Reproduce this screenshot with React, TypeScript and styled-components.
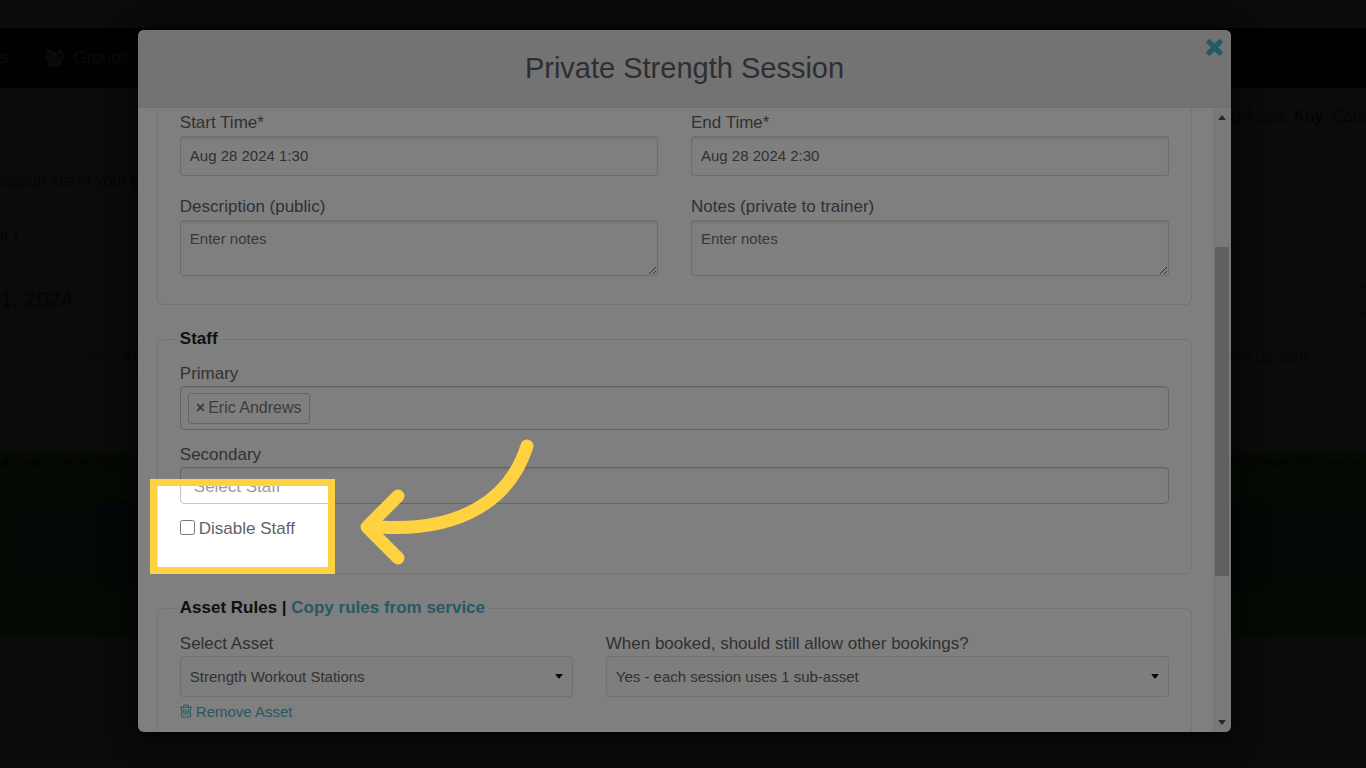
import React from "react";
import styled, { createGlobalStyle, css } from "styled-components";
import { FaPencilAlt } from "react-icons/fa";

const GlobalStyle = createGlobalStyle`
  * { box-sizing: border-box; }
  html, body { margin: 0; height: 100%; overflow: hidden; background: #161616; }
  body, button, input, textarea, select {
    font-family: "Liberation Sans", Arial, sans-serif;
  }
`;

const Page = styled.div`
  position: relative;
  height: 100vh;
  overflow: hidden;
`;

/* Calendar page, already darkened by the dialog backdrop */
const Backdrop = styled.div`
  display: flex;
  flex-direction: column;
  padding-top: 28px;
  color: #090909;
  font-size: 16px;
`;

const NavBar = styled.nav`
  display: flex;
  align-items: center;
  gap: 36px;
  height: 60px;
  background: #030303;
  color: #151515;
  font-size: 17px;
`;

const NavItem = styled.a`
  display: flex;
  align-items: center;
  gap: 9px;
  color: inherit;
  text-decoration: none;
`;

const FilterLine = styled.p`
  margin: 0;
  padding-top: 18px;
  height: 82px;
  line-height: 22px;
  white-space: nowrap;
  text-align: right;
`;

const PageText = styled.p<{ $height: number }>`
  margin: 0;
  height: ${(p) => p.$height}px;
  line-height: 22px;
  white-space: nowrap;
`;

const RangeRow = styled.div`
  display: flex;
  align-items: flex-start;
  justify-content: space-between;
  height: 54px;
`;

const RangeTitle = styled.h2`
  margin: 0;
  font-size: 22px;
  line-height: 24px;
  font-weight: 400;
`;

const RangeButton = styled.button`
  width: 36px;
  height: 32px;
  margin: -4px -29px 0 0;
  border: 2px solid #06120f;
  border-radius: 6px;
  background: none;
`;

const DayRow = styled.div`
  display: flex;
  justify-content: space-between;
  height: 28px;
  padding: 4px 58px 0 87px;
  border: 1px solid #121212;
  border-width: 1px 0;
  font-size: 15px;
  font-weight: 700;
  line-height: 20px;
  color: #061015;
`;

const EventBand = styled.div`
  height: 184px;
  margin-top: 84px;
  background: #081404;
  font-size: 11px;
  line-height: 16px;
  color: #030602;
`;

const EventTitle = styled.div`
  display: flex;
  justify-content: space-between;
  height: 46px;
  white-space: nowrap;
`;

const EventTitleText = styled.span`
  display: flex;
  align-items: center;
  gap: 3px;
  height: 16px;
  padding-right: 5px;
`;

const EventInner = styled.div`
  height: 90px;
  margin-left: 8px;
  padding-left: 92px;
  background: #06100a;
`;

const EventBadge = styled.div`
  width: 30px;
  height: 21px;
  border-radius: 3px;
  background: #050d12;
`;

const DialogLayer = styled.div`
  position: absolute;
  inset: 0;
  padding: 30px 0 36px 3px;
  display: flex;
  justify-content: center;
`;

const Dialog = styled.section`
  position: relative;
  display: flex;
  flex-direction: column;
  width: calc(80% + 3px);
  height: 100%;
  border-radius: 6px;
  background: #fff;
  box-shadow: 0 5px 30px #000;
`;

const DialogHeader = styled.header`
  position: relative;
  flex: none;
  height: 78px;
  border-bottom: 1px solid #dcdcdc;
  border-radius: 6px 6px 0 0;
  background: #e6e6e6;
  text-align: center;
`;

const DialogTitle = styled.h1`
  margin: 0;
  padding-top: 21px;
  font-size: 29px;
  line-height: 34px;
  font-weight: 400;
  color: #5a5e62;
`;

const CloseButton = styled.button`
  position: absolute;
  top: 4px;
  right: 4px;
  display: flex;
  padding: 0;
  border: 0;
  background: none;
  color: #4cb2c8;
  cursor: pointer;
`;

const DialogBody = styled.div`
  display: flex;
  flex: 1;
  min-height: 0;
  overflow: hidden;
  border-radius: 0 0 6px 6px;
`;

const Form = styled.form`
  flex: 1;
  min-width: 0;
  padding: 0 21px 0 19px;
`;

const Group = styled.fieldset<{ $continued?: boolean }>`
  margin: 0 0 24px;
  padding: 0 22px;
  min-width: 0;
  border: 1px solid #e6e6e6;
  border-radius: 6px;
  ${(p) =>
    p.$continued &&
    css`
      padding-bottom: 28px;
      border-top: 0;
      border-radius: 0 0 6px 6px;
    `}
  &:last-child { padding-bottom: 28px; }
`;

const Legend = styled.legend`
  margin-left: -4px;
  padding: 0 4px;
  font-size: 17px;
  line-height: 20px;
  font-weight: 700;
  color: #222;
`;

const TextLink = styled.a`
  color: #4cb2c8;
  text-decoration: none;
`;

const Columns = styled.div`
  display: grid;
  grid-template-columns: repeat(12, 1fr);
  column-gap: 33px;
`;

const Field = styled.div<{ $span?: number; $top?: number }>`
  display: flex;
  flex-direction: column;
  grid-column: span ${(p) => p.$span ?? 6};
  padding-top: ${(p) => p.$top ?? 0}px;
`;

const Label = styled.label`
  font-size: 17px;
  line-height: 24px;
  color: #626366;
`;

const controlStyle = css`
  width: 100%;
  border: 1px solid #dadada;
  border-radius: 3px;
  background: #fff;
  font-size: 15px;
  color: #626366;
  outline: none;
`;

const TextInput = styled.input`
  ${controlStyle}
  height: 40px;
  margin-top: 1px;
  padding: 0 9px 1px;
  box-shadow: inset 0 2px 2px #eaeaea;
`;

const TextArea = styled.textarea`
  ${controlStyle}
  display: block;
  height: 56px;
  margin-top: 1px;
  padding: 8px 9px;
  line-height: 20px;
  box-shadow: inset 0 2px 2px #eaeaea;
  &::placeholder { color: #6e6f72; }
`;

const TagBox = styled.div<{ $tall?: boolean }>`
  display: flex;
  align-items: center;
  height: ${(p) => (p.$tall ? 44 : 37)}px;
  padding: 0 7px;
  border: 1px solid #c8c8c8;
  border-radius: 4px;
  box-shadow: inset 0 1px 1px #e6e6e6;
`;

const Tag = styled.span`
  display: flex;
  align-items: center;
  gap: 3px;
  height: 31px;
  padding: 0 7px;
  border: 1px solid #c8c8c8;
  border-radius: 3px;
  font-size: 16px;
  color: #77797c;
`;

const TagRemove = styled.button`
  padding: 0;
  border: 0;
  background: none;
  font-size: 16px;
  font-weight: 700;
  color: #77797c;
`;

const TagInput = styled.input`
  flex: 1;
  min-width: 0;
  padding: 2px 6px 0;
  border: 0;
  outline: none;
  background: none;
  font-size: 17px;
  color: #626366;
  &::placeholder { color: #9a9a9a; }
`;

const CheckRow = styled.div`
  display: flex;
  align-items: center;
  gap: 4px;
  height: 24px;
  margin: 13px 0 32px;
`;

const CheckBox = styled.input`
  width: 15px;
  height: 15px;
  margin: 0 0 4px;
`;

const SelectWrap = styled.div`
  position: relative;
`;

const Select = styled.select`
  ${controlStyle}
  display: block;
  height: 41px;
  padding: 0 9px;
  appearance: none;
  border-color: #e0e0e0;
  background: #fcfcfc;
`;

const SelectCaret = styled.svg`
  position: absolute;
  top: 18px;
  right: 10px;
  pointer-events: none;
`;

const RemoveLink = styled.a`
  display: flex;
  align-items: center;
  gap: 4px;
  height: 28px;
  font-size: 15px;
  color: #4cb2c8;
  text-decoration: none;
`;

const ScrollTrack = styled.div`
  display: flex;
  flex-direction: column;
  align-items: center;
  flex: none;
  width: 18px;
  padding: 7px 2px 7px;
  background: #f2f2f2;
`;

const ScrollThumb = styled.div`
  width: 100%;
  flex: 328;
  background: #c1c1c1;
`;

const ScrollSpace = styled.div<{ $grow: number }>`
  flex: ${(p) => p.$grow};
`;

/* Highlighted step: everything outside of the frame is dimmed */
const Spotlight = styled.div`
  position: absolute;
  top: 449px;
  left: 12px;
  width: 185px;
  height: 95px;
  border: 7px solid #ffd242;
  box-shadow: 0 0 0 2000px rgba(0, 0, 0, 0.5);
  pointer-events: none;
`;

const Arrow = styled.svg`
  position: absolute;
  top: 400px;
  left: 217px;
  pointer-events: none;
`;

function UsersIcon() {
  return (
    <svg width="20" height="18" viewBox="0 0 2048 1792" fill="currentColor" aria-hidden="true">
      <path d="M657 896q-162 5-265 128h-134q-82 0-138-40.500t-56-118.500q0-353 124-353 6 0 43.500 21t97.500 42.500 119 21.500q67 0 133-23-5 37-5 66 0 139 81 256zm1071 637q0 120-73 189.500t-194 69.500h-874q-121 0-194-69.500t-73-189.500q0-53 3.500-103.500t14-109 26.500-108.500 43-97.500 62-81 85.500-53.500 111.500-20q10 0 43 21.500t73 48 107 48 135 21.500 135-21.500 107-48 73-48 43-21.500q61 0 111.500 20t85.500 53.500 62 81 43 97.500 26.500 108.500 14 109 3.500 103.500zm-1024-1277q0 106-75 181t-181 75-181-75-75-181 75-181 181-75 181 75 75 181zm704 384q0 159-112.500 271.500t-271.500 112.500-271.500-112.500-112.500-271.500 112.500-271.500 271.500-112.500 271.500 112.500 112.500 271.500zm576 225q0 78-56 118.500t-138 40.500h-134q-103-123-265-128 81-117 81-256 0-29-5-66 66 23 133 23 59 0 119-21.500t97.500-42.500 43.500-21q124 0 124 353zm-128-609q0 106-75 181t-181 75-181-75-75-181 75-181 181-75 181 75 75 181z" />
    </svg>
  );
}

function CloseIcon() {
  return (
    <svg width="25" height="25" viewBox="0 0 1792 1792" fill="currentColor" aria-hidden="true">
      <path d="M1490 1322q0 40-28 68l-136 136q-28 28-68 28t-68-28l-294-294-294 294q-28 28-68 28t-68-28l-136-136q-28-28-28-68t28-68l294-294-294-294q-28-28-28-68t28-68l136-136q28-28 68-28t68 28l294 294 294-294q28-28 68-28t68 28l136 136q28 28 28 68t-28 68l-294 294 294 294q28 28 28 68z" />
    </svg>
  );
}

function TrashIcon() {
  return (
    <svg width="12" height="14" viewBox="192 128 1408 1536" fill="currentColor" aria-hidden="true">
      <path d="M704 736v576q0 14-9 23t-23 9h-64q-14 0-23-9t-9-23v-576q0-14 9-23t23-9h64q14 0 23 9t9 23zm256 0v576q0 14-9 23t-23 9h-64q-14 0-23-9t-9-23v-576q0-14 9-23t23-9h64q14 0 23 9t9 23zm256 0v576q0 14-9 23t-23 9h-64q-14 0-23-9t-9-23v-576q0-14 9-23t23-9h64q14 0 23 9t9 23zm128 724v-948h-896v948q0 22 7 40.500t14.500 27 10.500 8.500h832q3 0 10.500-8.500t14.500-27 7-40.500zm-672-1076h448l-48-117q-7-9-17-11h-317q-10 2-17 11zm928 32v64q0 14-9 23t-23 9h-96v948q0 83-47 143.500t-113 60.500h-832q-66 0-113-58.500t-47-141.500v-952h-96q-14 0-23-9t-9-23v-64q0-14 9-23t23-9h309l70-167q15-37 54-63t79-26h320q40 0 79 26t54 63l70 167h309q14 0 23 9t9 23z" />
    </svg>
  );
}

function Caret() {
  return (
    <SelectCaret width="8" height="5" viewBox="0 0 8 5" aria-hidden="true">
      <path d="M1 0h6q1 0 .4.800L4.600 4.200Q4 5 3.400 4.200L.6.800Q0 0 1 0z" fill="#111" />
    </SelectCaret>
  );
}

function CalendarPage() {
  return (
    <Backdrop aria-hidden="true">
      <NavBar>
        <NavItem href="#">s</NavItem>
        <NavItem href="#">
          <UsersIcon />
          Groups
        </NavItem>
      </NavBar>
      <FilterLine>
        ed Asset: <b>Any</b>, Cate
      </FilterLine>
      <PageText $height={55}>ession are in your b</PageText>
      <PageText $height={63}>it )</PageText>
      <RangeRow>
        <RangeTitle>1, 2024</RangeTitle>
        <RangeButton type="button" tabIndex={-1} />
      </RangeRow>
      <DayRow>
        <span>Mon Aug</span>
        <span>Fri Aug 30th</span>
      </DayRow>
      <EventBand>
        <EventTitle>
          <EventTitleText>
            <FaPencilAlt size={9} /> Private Strength Session,
          </EventTitleText>
          <EventTitleText>sion, Private Skills Session</EventTitleText>
        </EventTitle>
        <EventInner>
          <EventBadge />
        </EventInner>
      </EventBand>
    </Backdrop>
  );
}

export default function App() {
  return (
    <Page>
      <GlobalStyle />
      <CalendarPage />
      <DialogLayer>
        <Dialog role="dialog" aria-labelledby="dialog-title">
          <DialogHeader>
            <DialogTitle id="dialog-title">Private Strength Session</DialogTitle>
            <CloseButton type="button" aria-label="Close">
              <CloseIcon />
            </CloseButton>
          </DialogHeader>
          <DialogBody>
            <Form>
              <Group $continued>
                <Columns>
                  <Field $top={3}>
                    <Label htmlFor="start">Start Time*</Label>
                    <TextInput id="start" defaultValue="Aug 28 2024 1:30" />
                  </Field>
                  <Field $top={3}>
                    <Label htmlFor="end">End Time*</Label>
                    <TextInput id="end" defaultValue="Aug 28 2024 2:30" />
                  </Field>
                  <Field $top={19}>
                    <Label htmlFor="description">Description (public)</Label>
                    <TextArea id="description" placeholder="Enter notes" />
                  </Field>
                  <Field $top={19}>
                    <Label htmlFor="notes">Notes (private to trainer)</Label>
                    <TextArea id="notes" placeholder="Enter notes" />
                  </Field>
                </Columns>
              </Group>
              <Group>
                <Legend>Staff</Legend>
                <Field $top={13}>
                  <Label htmlFor="primary">Primary</Label>
                  <TagBox $tall>
                    <Tag>
                      <TagRemove type="button" aria-label="Remove Eric Andrews">×</TagRemove>
                      Eric Andrews
                    </Tag>
                    <TagInput id="primary" />
                  </TagBox>
                </Field>
                <Field $top={13}>
                  <Label htmlFor="secondary">Secondary</Label>
                  <TagBox>
                    <TagInput id="secondary" placeholder="Select Staff" />
                  </TagBox>
                </Field>
                <CheckRow>
                  <CheckBox type="checkbox" id="disable" />
                  <Label htmlFor="disable">Disable Staff</Label>
                </CheckRow>
              </Group>
              <Group>
                <Legend>
                  Asset Rules | <TextLink href="#">Copy rules from service</TextLink>
                </Legend>
                <Columns>
                  <Field $span={5} $top={14}>
                    <Label htmlFor="asset">Select Asset</Label>
                    <SelectWrap>
                      <Select id="asset">
                        <option>Strength Workout Stations</option>
                      </Select>
                      <Caret />
                    </SelectWrap>
                  </Field>
                  <Field $span={7} $top={14}>
                    <Label htmlFor="allow">When booked, should still allow other bookings?</Label>
                    <SelectWrap>
                      <Select id="allow">
                        <option>Yes - each session uses 1 sub-asset</option>
                      </Select>
                      <Caret />
                    </SelectWrap>
                  </Field>
                </Columns>
                <RemoveLink href="#">
                  <TrashIcon />
                  Remove Asset
                </RemoveLink>
              </Group>
            </Form>
            <ScrollTrack aria-hidden="true">
              <svg width="8" height="5" viewBox="0 0 8 5">
                <path d="M0 5h8L4 0z" fill="#505050" />
              </svg>
              <ScrollSpace $grow={127} />
              <ScrollThumb />
              <ScrollSpace $grow={144} />
              <svg width="8" height="5" viewBox="0 0 8 5">
                <path d="M0 0h8L4 5z" fill="#505050" />
              </svg>
            </ScrollTrack>
          </DialogBody>
          <Spotlight />
          <Arrow width="190" height="145" viewBox="355 430 190 145" aria-hidden="true">
            <path
              d="M527 446C510 500 460 532 380 527M398 496L367 527L398 558"
              fill="none"
              stroke="#ffd242"
              strokeWidth="13"
              strokeLinecap="round"
              strokeLinejoin="round"
            />
          </Arrow>
        </Dialog>
      </DialogLayer>
    </Page>
  );
}
